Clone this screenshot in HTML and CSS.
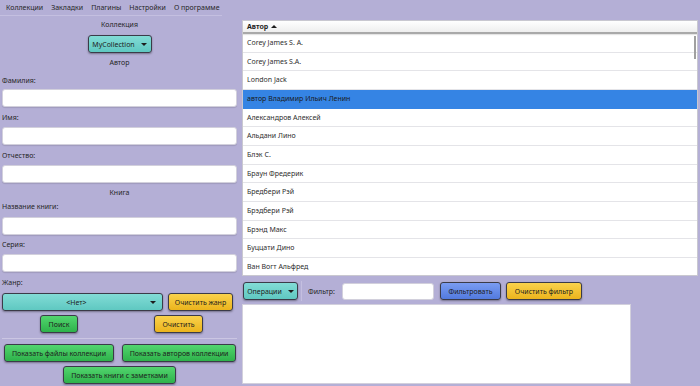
FILE: index.html
```html
<!doctype html>
<html lang="ru">
  <head>
    <meta charset="UTF-8" />
    <title>Библиотека</title>
    <link rel="stylesheet" href="styles.css">
  </head>
  <body>
    <div class="menu-bar">
      <span>Коллекции</span>
      <span>Закладки</span>
      <span>Плагины</span>
      <span>Настройки</span>
      <span>О программе</span>
    </div>

    <div class="main">
      <div class="search-panel">
        <div class="section-title">Коллекция</div>
        <div class="center-row">
          <button class="btn teal dropdown collection-btn">MyCollection <span class="arrow"></span></button>
        </div>

        <div class="section-title author-title">Автор</div>
        <label class="field-label">Фамилия:</label>
        <input class="text-input" type="text">
        <label class="field-label">Имя:</label>
        <input class="text-input" type="text">
        <label class="field-label">Отчество:</label>
        <input class="text-input" type="text">

        <div class="section-title book-title">Книга</div>
        <label class="field-label">Название книги:</label>
        <input class="text-input" type="text">
        <label class="field-label series-label">Серия:</label>
        <input class="text-input" type="text">

        <label class="field-label genre-label">Жанр:</label>
        <div class="genre-row">
          <button class="btn teal genre-combo"><span class="combo-text">&lt;Нет&gt;</span><span class="arrow"></span></button>
          <button class="btn yellow">Очистить жанр</button>
        </div>
        <div class="action-row">
          <button class="btn green search-btn">Поиск</button>
          <button class="btn yellow clear-btn">Очистить</button>
        </div>
        <div class="separator"></div>
        <div class="show-row">
          <button class="btn green files-btn">Показать файлы коллекции</button>
          <button class="btn green authors-btn">Показать авторов коллекции</button>
        </div>
        <div class="center-row notes-row">
          <button class="btn green notes-btn">Показать книги с заметками</button>
        </div>
      </div>

      <div class="result-panel">
        <div class="author-table">
          <div class="table-header">Автор <span class="sort-up"></span></div>
          <div class="table-body">
            <div class="row">Corey James S. A.</div>
            <div class="row">Corey James S.A.</div>
            <div class="row">London Jack</div>
            <div class="row selected">автор Владимир Ильич Ленин</div>
            <div class="row">Александров Алексей</div>
            <div class="row">Альдани Лино</div>
            <div class="row">Блэк С.</div>
            <div class="row">Браун Фредерик</div>
            <div class="row">Бредбери Рэй</div>
            <div class="row">Брэдбери Рэй</div>
            <div class="row">Брэнд Макс</div>
            <div class="row">Буццати Дино</div>
            <div class="row last">Ван Вогт Альфред</div>
            <div class="scroll-thumb"></div>
          </div>
        </div>

        <div class="filter-bar">
          <button class="btn teal dropdown ops-btn">Операции <span class="arrow"></span></button>
          <div class="v-sep"></div>
          <span class="filter-label">Фильтр:</span>
          <input class="filter-input" type="text">
          <button class="btn blue">Фильтровать</button>
          <button class="btn yellow">Очистить фильтр</button>
        </div>

        <div class="notes-box"></div>
      </div>
    </div>
  </body>
</html>
```

FILE: styles.css
```css
* {
  margin: 0;
  padding: 0;
  box-sizing: border-box;
}

body {
  font-family: 'Noto Sans', 'DejaVu Sans', sans-serif;
  font-size: 7px;
  background: #b4afd6;
  color: #262626;
  width: 700px;
  height: 386px;
  overflow: hidden;
}

.menu-bar {
  display: flex;
  gap: 8px;
  height: 16px;
  width: 222px;
  padding: 2px 0 0 6px;
  line-height: 11px;
  white-space: nowrap;
  border-bottom: 1px solid #c4bfe0;
}

.menu-bar span {
  flex-shrink: 0;
}

.main {
  display: flex;
  gap: 2px;
}

/* left search panel */
.search-panel {
  width: 240px;
  padding: 0 3px 0 2px;
  display: flex;
  flex-direction: column;
}

.section-title {
  text-align: center;
  line-height: 12px;
  margin-top: 3px;
}

.author-title {
  margin-top: 4px;
}

.book-title {
  margin-top: 4px;
}

.center-row {
  display: flex;
  justify-content: center;
  margin-top: 4px;
}

.field-label {
  line-height: 12px;
  margin-top: 5px;
  margin-bottom: 3px;
}

.author-title + .field-label {
  margin-top: 6px;
  margin-bottom: 2px;
}

.book-title + .field-label {
  margin-top: 2px;
  margin-bottom: 4px;
}

.series-label {
  margin-top: 4px;
}

.genre-label {
  margin-top: 5px;
  margin-bottom: 4px;
}

.text-input {
  height: 18px;
  border: 1px solid #d2d0dc;
  border-radius: 3px;
  background: #fff;
  box-shadow: 0 1px 1px rgba(0, 0, 0, 0.12);
}

.btn {
  font-family: inherit;
  font-size: 7px;
  height: 18px;
  padding: 0;
  border: 1px solid #3b3b48;
  border-radius: 3px;
  color: #1d1d1d;
  box-shadow: 0 1px 2px rgba(0, 0, 0, 0.35);
  white-space: nowrap;
}

.btn.teal {
  background: linear-gradient(#82dcd6, #5fc8c1);
}

.btn.green {
  background: linear-gradient(#52d56e, #2eb24b);
}

.btn.yellow {
  background: linear-gradient(#fad24c, #ebb41d);
}

.btn.blue {
  background: linear-gradient(#7a9cf2, #527ade);
}

.dropdown {
  display: flex;
  align-items: center;
  justify-content: center;
  gap: 6px;
}

.collection-btn {
  width: 64px;
}

.arrow {
  display: inline-block;
  width: 0;
  height: 0;
  border-left: 3px solid transparent;
  border-right: 3px solid transparent;
  border-top: 3px solid #1d1d1d;
}

.genre-row {
  display: flex;
  gap: 5px;
}

.genre-combo {
  width: 161px;
  display: flex;
  align-items: center;
  padding: 0 6px 0 0;
}

.combo-text {
  flex: 1;
  text-align: center;
}

.genre-row .yellow {
  width: 65px;
}

.action-row {
  display: flex;
  margin-top: 4px;
}

.search-btn {
  width: 38px;
  margin-left: 38px;
}

.clear-btn {
  width: 49px;
  margin-left: 76px;
}

.separator {
  height: 1px;
  background: #cbc6e3;
  margin: 5px 0 5px 0;
}

.show-row {
  display: flex;
  padding-left: 2px;
  gap: 8px;
}

.files-btn {
  width: 110px;
}

.authors-btn {
  width: 114px;
}

.notes-row {
  margin-top: 4px;
}

.notes-btn {
  width: 113px;
}

/* right result panel */
.result-panel {
  flex: 1;
  padding-top: 4px;
  display: flex;
  flex-direction: column;
}

.author-table {
  width: 456px;
  height: 256px;
  background: #fff;
  border: 1px solid #c9c8d0;
  overflow: hidden;
}

.table-header {
  height: 13px;
  line-height: 11px;
  padding-left: 4px;
  font-weight: bold;
  color: #1d1d1d;
  background: linear-gradient(#ffffff, #eeeeee);
  border-bottom: 2px solid #a9a9a9;
  box-shadow: 0 1px 1px rgba(0, 0, 0, 0.1);
  display: flex;
  align-items: center;
  gap: 3px;
}

.sort-up {
  width: 0;
  height: 0;
  border-left: 3px solid transparent;
  border-right: 3px solid transparent;
  border-bottom: 3px solid #1d1d1d;
}

.table-body {
  position: relative;
}

.row {
  height: 18.67px;
  line-height: 18px;
  padding-left: 4px;
  border-bottom: 1px solid #e4e4e8;
  color: #2e2e2e;
}

.row.selected {
  background: #3584e4;
  color: #1a1a1a;
  border-bottom-color: #3584e4;
}

.row.last {
  border-bottom: none;
}

.scroll-thumb {
  position: absolute;
  right: 1px;
  top: 2px;
  width: 2px;
  height: 23px;
  background: #a0a0a0;
}

.filter-bar {
  display: flex;
  align-items: center;
  height: 18px;
  margin-top: 6px;
  padding-left: 1px;
}

.ops-btn {
  width: 55px;
}

.v-sep {
  width: 1px;
  height: 20px;
  background: #c4bfe0;
  margin: 0 6px 0 3px;
}

.filter-input {
  width: 92px;
  height: 17px;
  margin: 0 6px 0 7px;
  border: 1px solid #d2d0dc;
  border-radius: 3px;
  background: #fff;
}

.filter-bar .blue {
  width: 61px;
  margin-right: 5px;
}

.filter-bar .yellow {
  width: 76px;
}

.notes-box {
  width: 389px;
  height: 80px;
  margin-top: 4px;
  background: #fff;
  border: 1px solid #d2d0dc;
}
```
